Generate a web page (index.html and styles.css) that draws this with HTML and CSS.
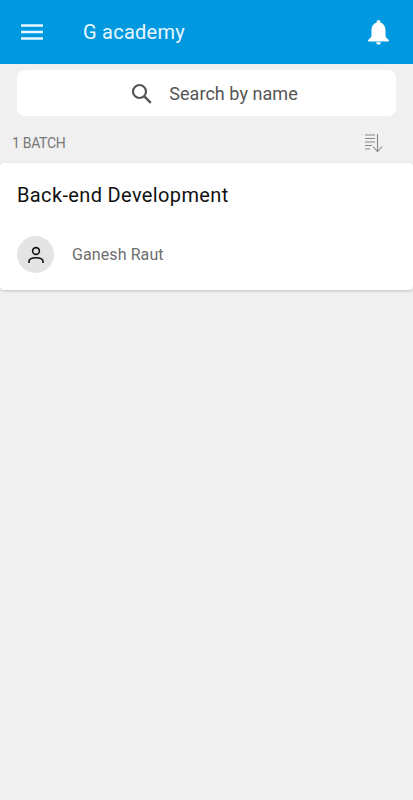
FILE: index.html
```html
<!DOCTYPE html>
<html lang="en">
<head>
  <meta charset="UTF-8" />
  <title>G academy</title>
  <link rel="stylesheet" href="styles.css">
</head>
<body>

  <!-- Header -->
  <header class="appbar">
    <svg class="menu-icon" width="22" height="16" viewBox="0 0 22 16">
      <path d="M0 1.500h22M0 8h22M0 14.500h22" stroke="#e3f5fd" stroke-width="2.400" fill="none"/>
    </svg>
    <div class="appbar-title">G academy</div>
    <svg class="bell-icon" width="21" height="25" viewBox="0 0 21 25">
      <path d="M10.500 0C9.400 0 8.700.8 8.700 1.800v.7C5.400 3.500 3.500 6.600 3.500 10.200v5.300c0 1.200-.9 2.300-2 3.200-.8.700-1.500 1.300-1.500 2 0 .5.400.8 1 .8h19c.6 0 1-.3 1-.8 0-.7-.7-1.300-1.500-2-1.100-.9-2-2-2-3.200v-5.300c0-3.600-1.900-6.700-5.200-7.700v-.7C12.300.8 11.600 0 10.500 0z" fill="#fff"/>
      <path d="M8.200 22.300h4.600c0 1.500-1 2.500-2.300 2.500s-2.300-1-2.300-2.500z" fill="#fff"/>
    </svg>
  </header>

  <!-- Search -->
  <div class="search-box">
    <svg class="search-icon" width="21" height="21" viewBox="0 0 21 21">
      <circle cx="8.500" cy="8.500" r="6.500" stroke="#555" stroke-width="2.200" fill="none"/>
      <path d="M13.300 13.300l6.500 6.500" stroke="#555" stroke-width="2.400" fill="none"/>
    </svg>
    <span class="search-text">Search by name</span>
  </div>

  <!-- Count row -->
  <div class="count-row">
    <span class="count-text">1 BATCH</span>
    <svg class="sort-icon" width="18" height="18" viewBox="0 0 18 18">
      <path d="M0 1h10M0 4.500h10M0 8h10M0 11.500h7M0 15h5" stroke="#888" stroke-width="1.200" fill="none"/>
      <path d="M12.500 0v17M8 12.500l4.500 5 4.500-5" stroke="#888" stroke-width="1.100" fill="none"/>
    </svg>
  </div>

  <!-- Batch card -->
  <div class="card">
    <div class="card-title">Back-end Development</div>
    <div class="teacher">
      <div class="avatar">
        <svg width="18" height="18" viewBox="0 0 18 18">
          <circle cx="9" cy="5" r="3.400" stroke="#111" stroke-width="1.600" fill="none"/>
          <path d="M2 17v-1.500c0-2.500 2.500-3.700 7-3.700s7 1.200 7 3.700V17" stroke="#111" stroke-width="1.600" fill="none"/>
        </svg>
      </div>
      <span class="teacher-name">Ganesh Raut</span>
    </div>
  </div>

</body>
</html>
```

FILE: styles.css
```css
html, body {
  height: 100%;
}
body {
  margin: 0;
  height: 800px;
  overflow: hidden;
  background-color: #f0f0f0;
  font-family: Roboto, sans-serif;
}
.appbar {
  height: 64px;
  background-color: #0099e0;
  display: flex;
  align-items: center;
  padding: 0 24px 0 21px;
}
.menu-icon {
  margin-right: 40px;
}
.appbar-title {
  flex: 1;
  color: #e8f7fe;
  font-size: 20px;
  letter-spacing: 0.25px;
}
.search-box {
  height: 46px;
  margin: 6px 17px 0 17px;
  padding-left: 16px;
  background-color: white;
  border-radius: 8px;
  display: flex;
  align-items: center;
  justify-content: center;
}
.search-icon {
  margin-right: 17px;
}
.search-text {
  color: #555;
  font-size: 18px;
  letter-spacing: 0.05px;
}
.count-row {
  height: 47px;
  padding: 6px 30px 0 12px;
  display: flex;
  align-items: center;
  justify-content: space-between;
  box-sizing: border-box;
}
.count-text {
  color: #777;
  font-size: 14px;
  letter-spacing: -0.3px;
}
.card {
  height: 127px;
  background-color: white;
  border-radius: 4px;
  box-shadow: 0 1px 3px rgba(0, 0, 0, 0.2);
  padding: 20px 17px 0 17px;
  box-sizing: border-box;
}
.card-title {
  color: #111;
  font-size: 20px;
  line-height: 24px;
  letter-spacing: 0.36px;
}
.teacher {
  display: flex;
  align-items: center;
  margin-top: 29px;
}
.avatar {
  width: 37px;
  height: 37px;
  border-radius: 50%;
  background-color: #e4e4e4;
  display: flex;
  align-items: center;
  justify-content: center;
}
.teacher-name {
  margin-left: 18px;
  color: #6e6e6e;
  font-size: 16px;
  letter-spacing: 0.1px;
}
```
